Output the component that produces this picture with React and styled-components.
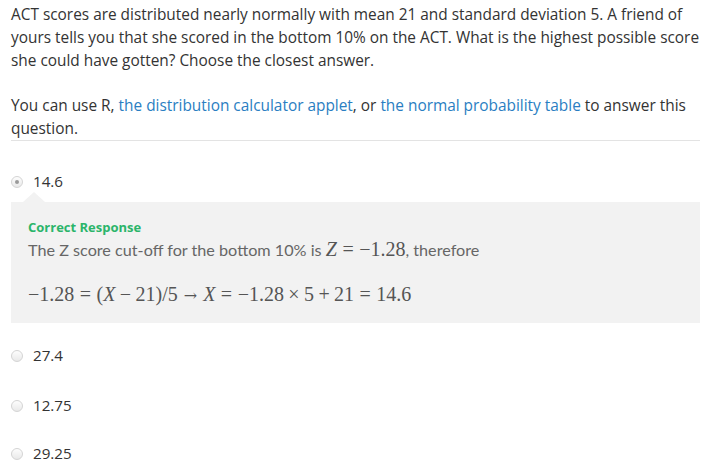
import React from "react";
import styled, { createGlobalStyle } from "styled-components";

const Global = createGlobalStyle`
  html, body { margin: 0; padding: 0; background: #fff; }
  body { font-family: "Open Sans", "Liberation Sans", sans-serif; color: #333; }
`;

const Page = styled.div`
  padding: 3px 9px 0 11px;
  width: 689px;
`;

const Para = styled.p`
  margin: 0 0 22px 0;
  font-size: 15.4px;
  line-height: 23px;
  &:last-of-type { margin-bottom: 0; }
`;

const Link = styled.a`
  color: #2a7ec2;
  text-decoration: none;
`;

const Divider = styled.hr`
  border: 0;
  border-top: 1px solid #e3e3e3;
  margin: 0;
`;

const Options = styled.div`
  display: flex;
  flex-direction: column;
  padding-top: 29px;
`;

const Option = styled.div`
  display: flex;
  flex-direction: column;
  margin-bottom: ${(p) => p.$gap}px;
`;

const OptionRow = styled.label`
  display: flex;
  align-items: center;
  gap: 10px;
  font-size: 15.2px;
  line-height: 23px;
  color: #333;
`;

const Radio = styled.span`
  width: 12px;
  height: 12px;
  border-radius: 50%;
  box-sizing: border-box;
  border: 1px solid #d4d4d4;
  background: linear-gradient(#fdfdfd, #e9e9e9);
  display: flex;
  align-items: center;
  justify-content: center;
  &::after {
    content: "";
    display: ${(p) => (p.$checked ? "block" : "none")};
    width: 4px;
    height: 4px;
    border-radius: 50%;
    background: #9a9a9a;
  }
`;

const Feedback = styled.div`
  position: relative;
  margin-top: 9px;
  background: #f2f2f2;
  padding: 15px 17px 15px 17px;
  &::before {
    content: "";
    position: absolute;
    top: -10px;
    left: 12px;
    border-left: 11px solid transparent;
    border-right: 11px solid transparent;
    border-bottom: 10px solid #f2f2f2;
  }
`;

const Verdict = styled.div`
  color: #2bb56a;
  font-weight: 700;
  font-size: 13px;
  line-height: 20px;
`;

const Explain = styled.div`
  color: #666;
  font-family: Lato, "Open Sans", sans-serif;
  font-size: 16.2px;
  line-height: 24px;
`;

const MathLine = styled.div`
  margin-top: 20px;
  font-family: "Liberation Serif", "DejaVu Serif", serif;
  font-size: 20px;
  line-height: 24px;
  color: #555;
`;

const MathInline = styled.span`
  font-family: "Liberation Serif", "DejaVu Serif", serif;
  font-size: 20px;
  color: #555;
`;

const V = styled.i`
  font-style: italic;
`;

const Op = styled.span`
  margin: 0 ${(p) => p.$s ?? 5.5}px;
`;

const Arrow = styled.span`
  font-family: "DejaVu Serif", serif;
  font-size: 16px;
  margin: 0 6px;
`;

export default function App() {
  return (
    <>
      <Global />
      <Page>
        <Para>
          ACT scores are distributed nearly normally with mean 21 and standard deviation 5. A friend of
          yours tells you that she scored in the bottom 10% on the ACT. What is the highest possible score
          she could have gotten? Choose the closest answer.
        </Para>
        <Para>
          You can use R, <Link href="#">the distribution calculator applet</Link>, or{" "}
          <Link href="#">the normal probability table</Link> to answer this question.
        </Para>
        <Divider />
        <Options>
          <Option $gap={21}>
            <OptionRow>
              <Radio $checked />
              14.6
            </OptionRow>
            <Feedback>
              <Verdict>Correct Response</Verdict>
              <Explain>
                The Z score cut-off for the bottom 10% is{" "}
                <MathInline>
                  <V>Z</V>
                  <Op>=</Op>−1.28
                </MathInline>
                , therefore
              </Explain>
              <MathLine>
                −1.28<Op>=</Op>(<V>X</V><Op $s={4.4}>−</Op>21)/5<Arrow>→</Arrow><V>X</V><Op>=</Op>−1.28<Op $s={4.4}>×</Op>5<Op $s={4.4}>+</Op>21<Op>=</Op>14.6
              </MathLine>
            </Feedback>
          </Option>
          <Option $gap={27}>
            <OptionRow>
              <Radio />
              27.4
            </OptionRow>
          </Option>
          <Option $gap={25}>
            <OptionRow>
              <Radio />
              12.75
            </OptionRow>
          </Option>
          <Option $gap={0}>
            <OptionRow>
              <Radio />
              29.25
            </OptionRow>
          </Option>
        </Options>
      </Page>
    </>
  );
}
